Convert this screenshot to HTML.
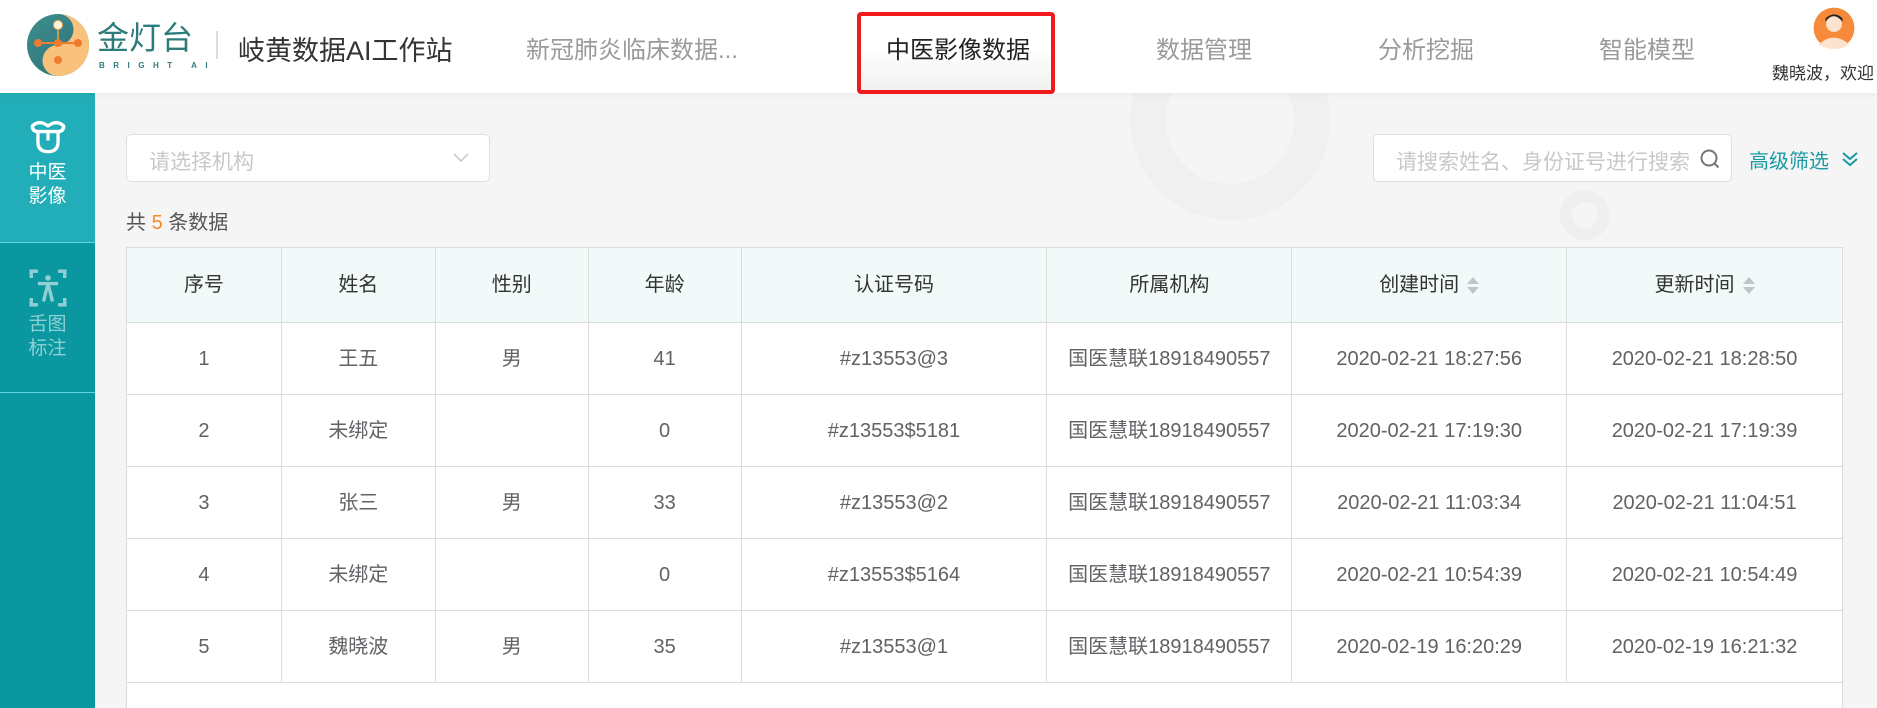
<!DOCTYPE html>
<html style="height:708px;overflow:hidden"><head><meta charset="utf-8"><style>
*{margin:0;padding:0;box-sizing:border-box}
body{width:1877px;height:708px;overflow:hidden;background:#f5f5f5;font-family:"Liberation Sans","Noto Sans CJK SC",sans-serif;position:relative}
.hdr{position:absolute;left:0;top:0;width:1877px;height:93px;background:#fff;box-shadow:0 2px 6px rgba(0,0,0,.04);z-index:2}
.abs{position:absolute;white-space:nowrap}
.nav{font-size:24px;color:#9a9a9a;top:30px;transform:translateX(-50%)}
.side{position:absolute;left:0;top:93px;width:95px;height:615px;background:#0b979f}
.si{position:absolute;left:0;width:95px;height:150px;text-align:center;font-size:19px;line-height:24px}
table{position:absolute;left:126px;top:247px;width:1717px;border-collapse:collapse;background:#fff;font-size:20px;color:#606266}
td,th{border:1px solid #dcdcdc;text-align:center;font-weight:normal;line-height:24px;vertical-align:middle}
th{height:75px;background:#f1f9f9;color:#333}
td{height:72px}
.sort{display:inline-block;vertical-align:middle;margin-left:8px;width:12px;height:18px;position:relative}
.sort:before{content:"";position:absolute;left:0;top:0;border:6px solid transparent;border-bottom:7px solid #c0c4cc;border-top:0}
.sort:after{content:"";position:absolute;left:0;top:10px;border:6px solid transparent;border-top:7px solid #c0c4cc;border-bottom:0}
</style></head><body>
<div class="abs" style="left:1130px;top:20px;width:200px;height:200px;border-radius:50%;border:36px solid #f0f0f0"></div>
<div class="abs" style="left:1560px;top:190px;width:50px;height:50px;border-radius:50%;border:12px solid #efefef"></div>
<div class="side">
<div class="si" style="top:0;background:#22aeb8;color:#fff;border-bottom:1px solid #5fd6dc">
<svg style="display:block;margin:24px auto 6px" width="38" height="38" viewBox="0 0 34 34" fill="none" stroke="#fff" stroke-width="3"><path d="M3 8q6-6 14 0q8-6 14 0q0 5-5 5H8Q3 13 3 8z"/><path d="M8 13v9q0 9 9 9t9-9v-9"/><path d="M17 13v8"/></svg>中医<br>影像</div>
<div class="si" style="top:150px;color:rgba(255,255,255,.55);border-bottom:1px solid #5fd6dc">
<svg style="display:block;margin:26px auto 6px" width="38" height="38" viewBox="0 0 34 34" fill="none" stroke="rgba(255,255,255,.55)" stroke-width="3"><path d="M2 8V2h6M26 2h6v6M2 26v6h6M32 26v6h-6"/><circle cx="17" cy="8" r="2.5" fill="rgba(255,255,255,.55)" stroke="none"/><path d="M8 13h18M17 13l-4 16M17 13l4 16"/></svg>舌图<br>标注</div>
</div>
<div class="hdr">
<svg class="abs" style="left:26px;top:13px" width="64" height="64" viewBox="0 0 64 64">
<defs><linearGradient id="g" x1="0" y1="0" x2="1" y2="1"><stop offset="0" stop-color="#3e8f8f"/><stop offset="1" stop-color="#2a6e74"/></linearGradient></defs>
<circle cx="32" cy="32" r="31" fill="url(#g)"/>
<path d="M32 1a31 31 0 0 1 0 62a15.5 15.5 0 0 1 0-31a15.5 15.5 0 0 0 0-31z" fill="#f9c27c"/>
<line x1="32" y1="10" x2="32" y2="30" stroke="#f3a35a" stroke-width="1.5"/>
<line x1="12" y1="30" x2="52" y2="30" stroke="#f07a30" stroke-width="2"/>
<circle cx="32" cy="12" r="4.5" fill="#fff4dd" stroke="#f3a35a"/>
<circle cx="12" cy="30" r="4" fill="#f07a30"/><circle cx="32" cy="30" r="4" fill="#f07a30"/><circle cx="52" cy="30" r="4" fill="#f07a30"/><circle cx="32" cy="47" r="4" fill="#f07a30"/>
</svg>
<div class="abs" style="left:97px;top:18px;font-size:32px;color:#2e7b7b;letter-spacing:0;line-height:40px">金灯台</div>
<div class="abs" style="left:99px;top:61px;font-size:8px;color:#2e7b7b;letter-spacing:8.5px;font-weight:bold">BRIGHT AI</div>
<div class="abs" style="left:216px;top:31px;width:2px;height:28px;background:#ddd"></div>
<div class="abs" style="left:238px;top:29px;font-size:27px;color:#333">岐黄数据AI工作站</div>
<div class="abs nav" style="left:632px">新冠肺炎临床数据...</div>
<div class="abs" style="left:857px;top:12px;width:198px;height:82px;border:4px solid #f21b1b;border-radius:4px;background:linear-gradient(#fff 40%,#f1f1f1)"></div>
<div class="abs nav" style="left:958px;color:#222">中医影像数据</div>
<div class="abs nav" style="left:1204px">数据管理</div>
<div class="abs nav" style="left:1426px">分析挖掘</div>
<div class="abs nav" style="left:1647px">智能模型</div>
<svg class="abs" style="left:1813px;top:7px" width="42" height="42" viewBox="0 0 37 37"><circle cx="18.5" cy="18.5" r="18" fill="#f7893a"/><circle cx="18.5" cy="15" r="7" fill="#fde3cf"/><path d="M11 13q7-10 15 0v-3q-7-7-15 0z" fill="#222"/><path d="M5 33q13-12 27 0q-13 8-27 0z" fill="#fde3cf"/></svg>
<div class="abs" style="left:1772px;top:59px;font-size:17px;color:#333">魏晓波，欢迎</div>
</div>
<div class="abs" style="left:126px;top:134px;width:364px;height:48px;background:#fff;border:1px solid #dcdfe6;border-radius:5px;z-index:1"><span class="abs" style="left:22px;top:11px;font-size:21px;color:#c8c8c8">请选择机构</span><svg class="abs" style="left:326px;top:18px" width="16" height="10"><path d="M1 1l7 7 7-7" fill="none" stroke="#c0c4cc" stroke-width="1.5"/></svg></div>
<div class="abs" style="left:1373px;top:134px;width:359px;height:48px;background:#fff;border:1px solid #dcdfe6;border-radius:5px;z-index:1"><span class="abs" style="left:22px;top:11px;font-size:21px;color:#c8c8c8">请搜索姓名、身份证号进行搜索</span><svg class="abs" style="left:325px;top:13px" width="22" height="22"><circle cx="10" cy="10" r="7.5" fill="none" stroke="#777" stroke-width="2"/><path d="M15.5 15.5l4 4" stroke="#777" stroke-width="2"/></svg></div>
<div class="abs" style="left:1749px;top:145px;font-size:20px;color:#1a9aa3">高级筛选</div>
<svg class="abs" style="left:1841px;top:151px" width="18" height="16"><path d="M2 2l7 6 7-6M2 8l7 6 7-6" fill="none" stroke="#1a9aa3" stroke-width="2"/></svg>
<div class="abs" style="left:126px;top:206px;font-size:20px;color:#555">共 <span style="color:#f58a2a">5</span> 条数据</div>
<table>
<colgroup><col style="width:155px"><col style="width:154px"><col style="width:153px"><col style="width:153px"><col style="width:306px"><col style="width:245px"><col style="width:275px"><col style="width:276px"></colgroup>
<tr><th>序号</th><th>姓名</th><th>性别</th><th>年龄</th><th>认证号码</th><th>所属机构</th><th>创建时间<span class="sort"></span></th><th>更新时间<span class="sort"></span></th></tr>
<tr><td>1</td><td>王五</td><td>男</td><td>41</td><td>#z13553@3</td><td>国医慧联18918490557</td><td>2020-02-21 18:27:56</td><td>2020-02-21 18:28:50</td></tr>
<tr><td>2</td><td>未绑定</td><td></td><td>0</td><td>#z13553$5181</td><td>国医慧联18918490557</td><td>2020-02-21 17:19:30</td><td>2020-02-21 17:19:39</td></tr>
<tr><td>3</td><td>张三</td><td>男</td><td>33</td><td>#z13553@2</td><td>国医慧联18918490557</td><td>2020-02-21 11:03:34</td><td>2020-02-21 11:04:51</td></tr>
<tr><td>4</td><td>未绑定</td><td></td><td>0</td><td>#z13553$5164</td><td>国医慧联18918490557</td><td>2020-02-21 10:54:39</td><td>2020-02-21 10:54:49</td></tr>
<tr><td>5</td><td>魏晓波</td><td>男</td><td>35</td><td>#z13553@1</td><td>国医慧联18918490557</td><td>2020-02-19 16:20:29</td><td>2020-02-19 16:21:32</td></tr>
<tr><td colspan="8" style="height:40px;border-bottom:none"></td></tr>
</table>
</body></html>
